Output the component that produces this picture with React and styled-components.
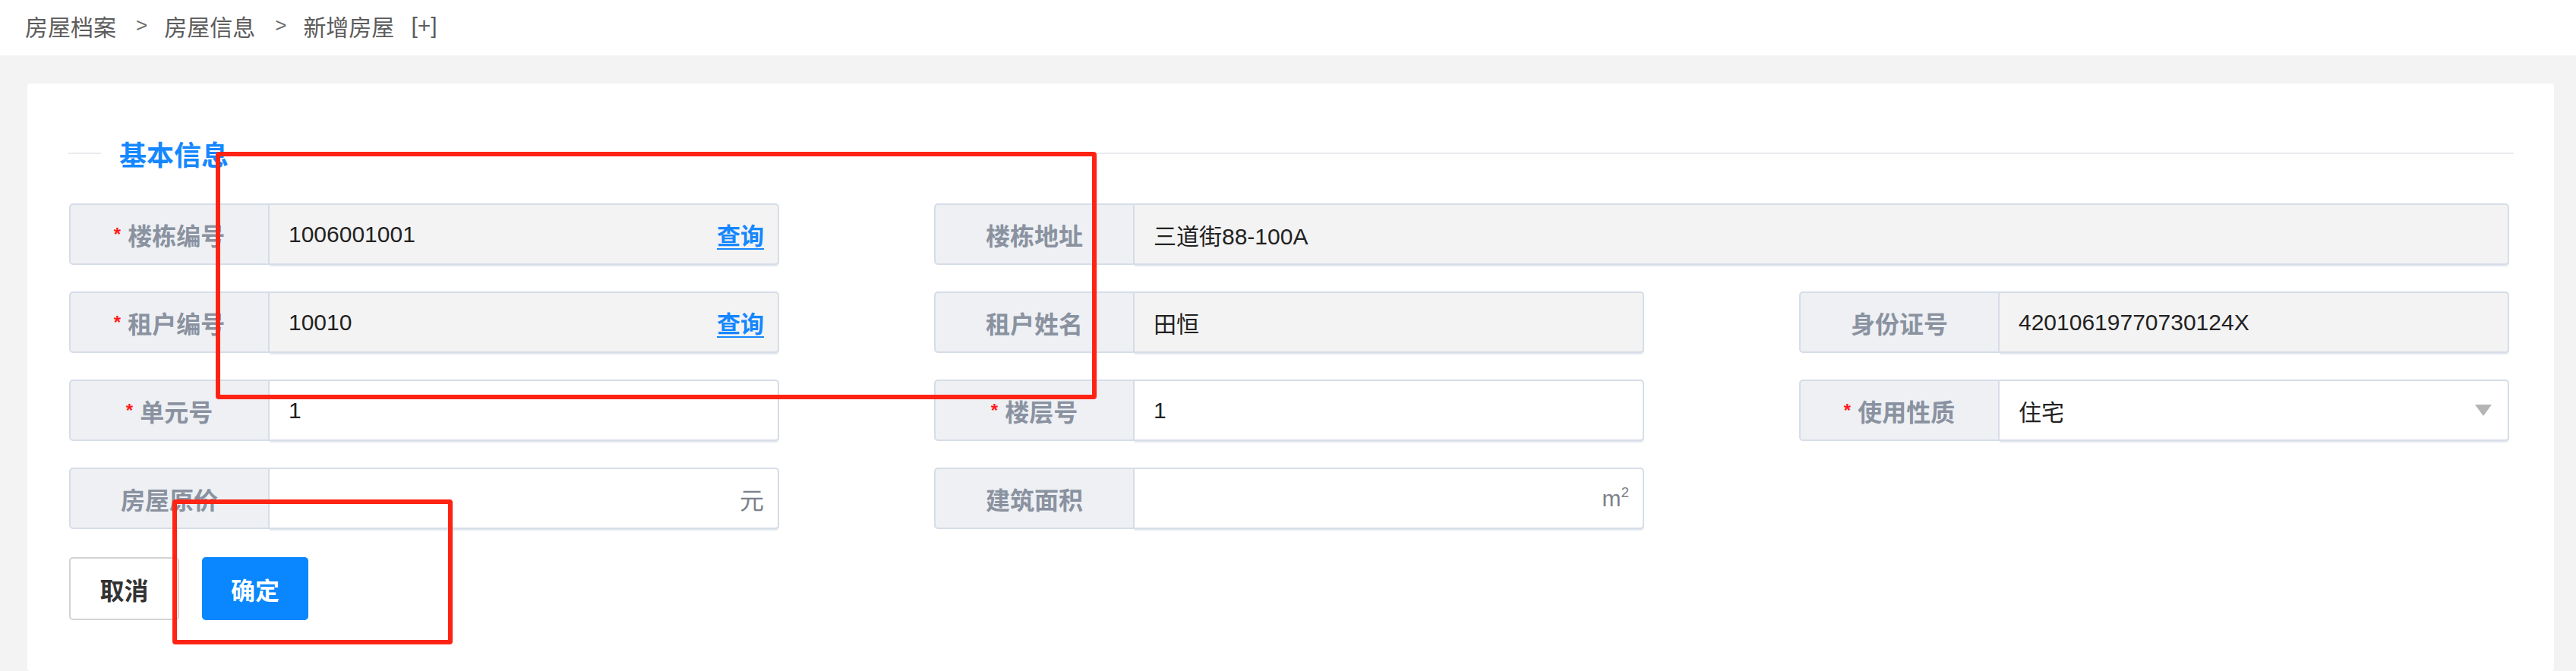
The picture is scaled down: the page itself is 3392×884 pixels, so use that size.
import React from 'react';
import styled, { createGlobalStyle } from 'styled-components';

const GlobalStyle = createGlobalStyle`
  html, body { margin: 0; padding: 0; }
  body {
    background: #f3f3f3;
    font-family: "Noto Sans CJK SC", "Noto Sans", sans-serif;
  }
  * { box-sizing: border-box; }
`;

const Page = styled.div`
  position: relative;
  width: 3392px;
  height: 884px;
  overflow: hidden;
  background: #f3f3f3;
`;

const Breadcrumb = styled.nav`
  height: 73px;
  background: #ffffff;
  display: flex;
  align-items: center;
  padding: 0 0 6px 33px;
  font-size: 30px;
  color: #5c5c5c;
`;

const Crumb = styled.span`
  line-height: 1;
`;

const Sep = styled.span`
  font-family: "Liberation Sans", sans-serif;
  font-size: 26px;
  margin: 0 22px 0 26px;
  color: #6a6a6a;
`;

const Plus = styled.span`
  margin-left: 22px;
  font-family: "Liberation Sans", sans-serif;
  font-size: 30px;
`;

const Main = styled.main`
  padding: 37px 29px 0 36px;
`;

const Card = styled.section`
  background: #ffffff;
  border-radius: 4px;
  min-height: 774px;
  padding: 74px 53px 0 54px;
`;

const Legend = styled.div`
  display: flex;
  align-items: center;
  height: 36px;

  &::before {
    content: "";
    width: 43px;
    height: 2px;
    background: #e9ebee;
    margin-right: 24px;
  }
  &::after {
    content: "";
    flex: 1;
    height: 2px;
    background: #e9ebee;
    margin-left: 20px;
  }
`;

const LegendTitle = styled.h2`
  margin: 0;
  font-size: 36px;
  line-height: 36px;
  font-weight: 700;
  color: #1587ff;
`;

const FormGrid = styled.div`
  margin: 48px 0 0 1px;
  display: grid;
  grid-template-columns: repeat(3, 935px);
  column-gap: 204px;
  row-gap: 35px;
`;

const Field = styled.div`
  display: flex;
  height: 81px;
  grid-column: ${(p) => (p.$span ? `span ${p.$span}` : 'auto')};
`;

const Label = styled.div`
  width: 264px;
  flex-shrink: 0;
  display: flex;
  align-items: center;
  justify-content: center;
  background: #eef0f4;
  border: 2px solid #d6dde8;
  border-radius: 5px 0 0 5px;
  font-size: 32px;
  font-weight: 700;
  color: #8a92a0;
`;

const Star = styled.span`
  color: #ff1a1a;
  font-size: 24px;
  font-family: "Liberation Sans", sans-serif;
  margin-right: 9px;
`;

const Control = styled.div`
  flex: 1;
  display: flex;
  align-items: center;
  padding: 0 18px 0 25px;
  background: ${(p) => (p.$readOnly ? '#f3f3f3' : '#ffffff')};
  border: 2px solid #d6dde8;
  border-left: none;
  border-radius: 0 5px 5px 0;
  box-shadow: 0 2px 0 #e4e8ef;
  font-family: "Liberation Sans", "Noto Sans CJK SC", sans-serif;
  font-size: 30px;
  color: #222222;
`;

const Value = styled.span`
  white-space: nowrap;
`;

const QueryLink = styled.a`
  margin-left: auto;
  font-family: "Noto Sans CJK SC", sans-serif;
  font-size: 31px;
  font-weight: 700;
  color: #1587ff;
  text-decoration: underline;
  text-underline-offset: 5px;
  text-decoration-thickness: 2px;
  cursor: pointer;
`;

const Suffix = styled.span`
  margin-left: auto;
  font-size: ${(p) => (p.$cjk ? '32px' : '30px')};
  font-family: ${(p) => (p.$cjk ? '"Noto Sans CJK SC", sans-serif' : '"Liberation Sans", sans-serif')};
  color: #7b818b;

  sup {
    font-size: 19px;
    vertical-align: 12px;
    line-height: 0;
  }
`;

const Caret = styled.span`
  margin-left: auto;
  margin-right: 3px;
  width: 0;
  height: 0;
  border-left: 11px solid transparent;
  border-right: 11px solid transparent;
  border-top: 15px solid #b4b4b4;
`;

const Actions = styled.div`
  display: flex;
  gap: 30px;
  margin: 37px 0 0 1px;
`;

const Button = styled.button`
  height: 83px;
  width: ${(p) => (p.$primary ? '140px' : '145px')};
  border-radius: 5px;
  border: ${(p) => (p.$primary ? 'none' : '2px solid #d3d3d3')};
  background: ${(p) => (p.$primary ? '#0a87ff' : '#ffffff')};
  color: ${(p) => (p.$primary ? '#ffffff' : '#333333')};
  font-family: "Noto Sans CJK SC", sans-serif;
  font-size: 32px;
  font-weight: 700;
  cursor: pointer;
`;

const Mark = styled.div`
  position: absolute;
  left: ${(p) => p.$x}px;
  top: ${(p) => p.$y}px;
  width: ${(p) => p.$w}px;
  height: ${(p) => p.$h}px;
  border: 6px solid #ff2314;
  border-radius: 4px;
  pointer-events: none;
`;

function FormField({ label, required, readOnly, span, children }) {
  return (
    <Field $span={span}>
      <Label>
        {required && <Star>*</Star>}
        {label}
      </Label>
      <Control $readOnly={readOnly}>{children}</Control>
    </Field>
  );
}

export default function App() {
  return (
    <Page>
      <GlobalStyle />
      <Breadcrumb>
        <Crumb>房屋档案</Crumb>
        <Sep>&gt;</Sep>
        <Crumb>房屋信息</Crumb>
        <Sep>&gt;</Sep>
        <Crumb>新增房屋</Crumb>
        <Plus>[+]</Plus>
      </Breadcrumb>
      <Main>
        <Card>
          <Legend>
            <LegendTitle>基本信息</LegendTitle>
          </Legend>
          <FormGrid>
            <FormField label="楼栋编号" required readOnly>
              <Value>1006001001</Value>
              <QueryLink>查询</QueryLink>
            </FormField>
            <FormField label="楼栋地址" readOnly span={2}>
              <Value>三道街88-100A</Value>
            </FormField>

            <FormField label="租户编号" required readOnly>
              <Value>10010</Value>
              <QueryLink>查询</QueryLink>
            </FormField>
            <FormField label="租户姓名" readOnly>
              <Value>田恒</Value>
            </FormField>
            <FormField label="身份证号" readOnly>
              <Value>42010619770730124X</Value>
            </FormField>

            <FormField label="单元号" required>
              <Value>1</Value>
            </FormField>
            <FormField label="楼层号" required>
              <Value>1</Value>
            </FormField>
            <FormField label="使用性质" required>
              <Value>住宅</Value>
              <Caret />
            </FormField>

            <FormField label="房屋原价">
              <Suffix $cjk>元</Suffix>
            </FormField>
            <FormField label="建筑面积">
              <Suffix>
                m<sup>2</sup>
              </Suffix>
            </FormField>
          </FormGrid>
          <Actions>
            <Button>取消</Button>
            <Button $primary>确定</Button>
          </Actions>
        </Card>
      </Main>
      <Mark $x={284} $y={200} $w={1160} $h={326} />
      <Mark $x={227} $y={658} $w={369} $h={191} />
    </Page>
  );
}
